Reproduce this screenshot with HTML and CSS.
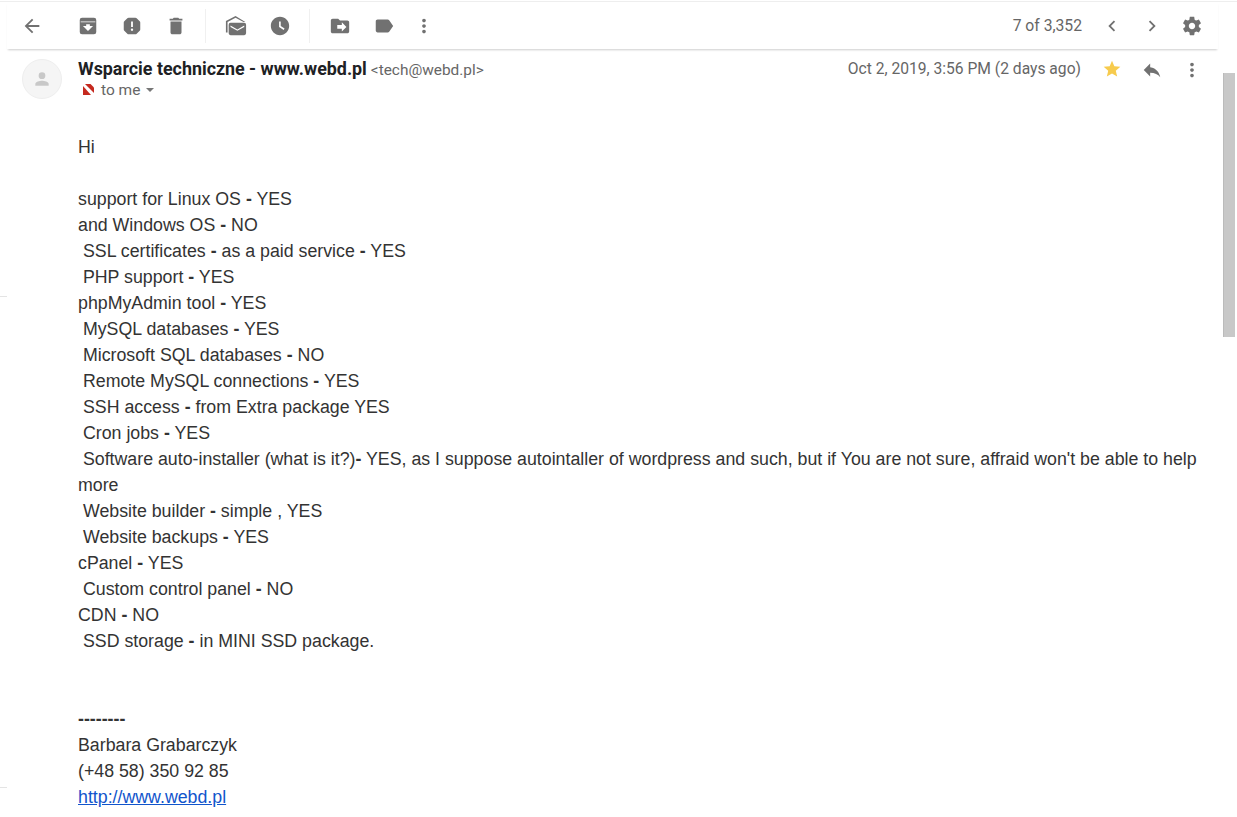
FILE: index.html
```html
<!DOCTYPE html>
<html lang="en">
<head>
    <meta charset="UTF-8">
    <title>Gmail message</title>
    <link rel="stylesheet" href="styles.css">
</head>
<body>

    <div class="page">
        <!-- Toolbar -->
        <div class="toolbar">
            <div class="tool-group back-group">
                <svg class="icon" viewBox="0 0 24 24"><path d="M20 11H7.830l5.590-5.590L12 4l-8 8 8 8 1.410-1.410L7.830 13H20v-2z"/></svg>
            </div>
            <div class="tool-group first-group">
                <svg class="icon" viewBox="0 0 24 24"><path d="M5.500 3h13a2.500 2.500 0 0 1 2.500 2.500v13a2.500 2.500 0 0 1-2.500 2.500h-13A2.500 2.500 0 0 1 3 18.500v-13A2.500 2.500 0 0 1 5.500 3zM4 7v.8h16V7H4zm8 10.500l5.500-5.500H14v-2h-4v2H6.500z" fill-rule="evenodd"/></svg>
                <svg class="icon" viewBox="0 0 24 24"><path d="M8.300 3h7.400a2 2 0 0 1 1.400.6l3.300 3.300a2 2 0 0 1 .6 1.400v7.400a2 2 0 0 1-.6 1.400l-3.300 3.300a2 2 0 0 1-1.400.6H8.300a2 2 0 0 1-1.400-.6l-3.300-3.300a2 2 0 0 1-.6-1.400V8.300a2 2 0 0 1 .6-1.400l3.300-3.300A2 2 0 0 1 8.300 3zM11 7v6h2V7h-2zm1 7.700a1.300 1.300 0 1 0 0 2.600 1.300 1.300 0 0 0 0-2.600z" fill-rule="evenodd"/></svg>
                <svg class="icon" viewBox="0 0 24 24"><path d="M6 19c0 1.100.9 2 2 2h8c1.100 0 2-.9 2-2V7H6v12zM19 4h-3.500l-1-1h-5l-1 1H5v2h14V4z"/></svg>
            </div>
            <div class="tool-group">
                <svg class="icon" viewBox="0 0 24 24"><path d="M11.500 1L1 6.500V19h1.800V7.500l8.700-4.600 8.700 4.600h2L11.500 1zM6 8.500h15a2 2 0 0 1 2 2V20a2 2 0 0 1-2 2H6a2 2 0 0 1-2-2v-9.500a2 2 0 0 1 2-2zm0 3V13l7.500 4.200L21 13v-1.500l-7.500 4.200L6 11.500z" fill-rule="evenodd"/></svg>
                <svg class="icon" viewBox="0 0 24 24"><path d="M11.990 2C6.470 2 2 6.480 2 12s4.470 10 9.990 10C17.520 22 22 17.520 22 12S17.520 2 11.990 2zm4.010 14.300L11 13V7h1.800v5.100l4.200 2.700-1 1.500z"/></svg>
            </div>
            <div class="tool-group">
                <svg class="icon" viewBox="0 0 24 24"><path d="M20 6h-8l-2-2H4c-1.100 0-1.990.9-1.990 2L2 18c0 1.100.9 2 2 2h16c1.100 0 2-.9 2-2V8c0-1.100-.9-2-2-2zm-6 12v-3H9v-4h5V8l5 5-5 5z"/></svg>
                <svg class="icon" viewBox="0 0 24 24"><path d="M17.630 5.840C17.270 5.330 16.670 5 16 5L5 5.010C3.900 5.010 3 5.900 3 7v10c0 1.100.9 1.990 2 1.990L16 19c.67 0 1.270-.33 1.630-.84L22 12l-4.370-6.160z"/></svg>
                <svg class="icon more" viewBox="0 0 24 24"><path d="M12 8c1.100 0 2-.9 2-2s-.9-2-2-2-2 .9-2 2 .9 2 2 2zm0 2c-1.100 0-2 .9-2 2s.9 2 2 2 2-.9 2-2-.9-2-2-2zm0 6c-1.100 0-2 .9-2 2s.9 2 2 2 2-.9 2-2-.9-2-2-2z"/></svg>
            </div>
            <div class="pager">
                <span class="count">7 of 3,352</span>
                <svg class="icon" viewBox="0 0 24 24"><path d="M15.410 7.410L14 6l-6 6 6 6 1.410-1.410L10.830 12z"/></svg>
                <svg class="icon" viewBox="0 0 24 24"><path d="M10 6L8.590 7.410 13.170 12l-4.580 4.590L10 18l6-6z"/></svg>
                <svg class="icon" viewBox="0 0 24 24"><path d="M19.430 12.980c.04-.32.07-.64.07-.98s-.03-.66-.07-.98l2.110-1.650c.19-.15.24-.42.12-.64l-2-3.460c-.12-.22-.39-.3-.61-.22l-2.490 1c-.52-.4-1.080-.73-1.690-.98l-.38-2.650C14.460 2.180 14.250 2 14 2h-4c-.25 0-.46.18-.49.42l-.38 2.650c-.61.25-1.170.59-1.690.98l-2.490-1c-.23-.09-.49 0-.61.22l-2 3.460c-.13.22-.07.49.12.64l2.110 1.650c-.04.32-.07.65-.07.98s.03.66.07.98l-2.110 1.650c-.19.15-.24.42-.12.64l2 3.460c.12.22.39.3.61.22l2.490-1c.52.4 1.080.73 1.690.98l.38 2.650c.03.24.24.42.49.42h4c.25 0 .46-.18.49-.42l.38-2.650c.61-.25 1.170-.59 1.690-.98l2.490 1c.23.09.49 0 .61-.22l2-3.460c.12-.22.07-.49-.12-.64l-2.110-1.650zM12 15.500c-1.930 0-3.500-1.570-3.500-3.500s1.570-3.500 3.500-3.500 3.500 1.570 3.500 3.500-1.570 3.500-3.500 3.500z"/></svg>
            </div>
        </div>

        <!-- Message -->
        <div class="message">
            <div class="avatar">
                <svg viewBox="0 0 24 24"><circle cx="12" cy="8" r="4"/><path d="M4 20v-2c0-2.700 5.300-4 8-4s8 1.300 8 4v2H4z"/></svg>
            </div>
            <div class="message-main">
                <div class="message-head">
                    <div class="sender-info">
                        <div class="sender"><span class="sender-name">Wsparcie techniczne - www.webd.pl</span> <span class="sender-email">&lt;tech@webd.pl&gt;</span></div>
                        <div class="recipient">
                            <svg class="no-lock" viewBox="0 0 16 16"><path d="M4 2h5.500L13 5.500V11z"/><path d="M2 4l8 9H2z"/></svg>
                            <span>to me</span>
                            <span class="caret"></span>
                        </div>
                    </div>
                    <div class="message-date">Oct 2, 2019, 3:56 PM (2 days ago)</div>
                    <div class="message-actions">
                        <svg class="icon star" viewBox="0 0 24 24"><path d="M12 17.270L18.180 21l-1.640-7.030L22 9.240l-7.190-.61L12 2 9.190 8.630 2 9.240l5.460 4.730L5.820 21z"/></svg>
                        <svg class="icon" viewBox="0 0 24 24"><path d="M10 9V5l-7 7 7 7v-4.100c5 0 8.500 1.600 11 5.100-1-5-4-10-11-11z"/></svg>
                        <svg class="icon" viewBox="0 0 24 24"><path d="M12 8c1.100 0 2-.9 2-2s-.9-2-2-2-2 .9-2 2 .9 2 2 2zm0 2c-1.100 0-2 .9-2 2s.9 2 2 2 2-.9 2-2-.9-2-2-2zm0 6c-1.100 0-2 .9-2 2s.9 2 2 2 2-.9 2-2-.9-2-2-2z"/></svg>
                    </div>
                </div>
                <div class="message-body">
                    Hi<br>
                    <br>
                    support for Linux OS <b>-</b> YES<br>
                    and Windows OS <b>-</b> NO<br>
                    &nbsp;SSL certificates <b>-</b> as a paid service <b>-</b> YES<br>
                    &nbsp;PHP support <b>-</b> YES<br>
                    phpMyAdmin tool <b>-</b> YES<br>
                    &nbsp;MySQL databases <b>-</b> YES<br>
                    &nbsp;Microsoft SQL databases <b>-</b> NO<br>
                    &nbsp;Remote MySQL connections <b>-</b> YES<br>
                    &nbsp;SSH access <b>-</b> from Extra package YES<br>
                    &nbsp;Cron jobs <b>-</b> YES<br>
                    &nbsp;Software auto-installer (what is it?)<b>-</b> YES, as I suppose autointaller of wordpress and such, but if You are not sure, affraid won't be able to help more<br>
                    &nbsp;Website builder <b>-</b> simple , YES<br>
                    &nbsp;Website backups <b>-</b> YES<br>
                    cPanel <b>-</b> YES<br>
                    &nbsp;Custom control panel <b>-</b> NO<br>
                    CDN <b>-</b> NO<br>
                    &nbsp;SSD storage <b>-</b> in MINI SSD package.<br>
                    <br>
                    <br>
                    <b>--------</b><br>
                    Barbara Grabarczyk<br>
                    (+48 58) 350 92 85<br>
                    <a href="#">http://www.webd.pl</a>
                </div>
            </div>
        </div>
    </div>

    <!-- Scrollbar -->
    <div class="scrollbar">
        <div class="scroll-thumb"></div>
    </div>

    <!-- Faint ticks on the left edge -->
    <div class="edge-mark edge-mark-top"></div>
    <div class="edge-mark edge-mark-bottom"></div>

</body>
</html>
```

FILE: styles.css
```css
* {
    margin: 0;
    padding: 0;
    box-sizing: border-box;
}

html, body {
    height: 100%;
    overflow: hidden;
}

body {
    display: flex;
    font-family: Roboto, Arial, sans-serif;
    background-color: #fff;
    color: #222;
}

.page {
    flex: 1;
    min-width: 0;
    padding-left: 7px;
    padding-top: 2px;
    background: linear-gradient(#eee, #eee) 0 1px / 100% 1px no-repeat;
}

.icon {
    width: 22px;
    height: 22px;
    fill: #717171;
    display: block;
    flex: none;
}

/* Toolbar */
.toolbar {
    display: flex;
    align-items: center;
    height: 47px;
    width: 1211px;
    box-shadow: 0 2px 2px -1px rgba(0, 0, 0, 0.2);
}

.tool-group {
    display: flex;
    align-items: center;
    gap: 22px;
    height: 34px;
    padding: 0 18px 0 19px;
    border-left: 1px solid #f0f0f0;
}

.back-group {
    width: 70px;
    padding: 0 0 0 14px;
    border-left: none;
}

.first-group {
    padding-left: 0;
    border-left: none;
}

.tool-group .more {
    margin-left: -4px;
}

.pager {
    margin-left: auto;
    display: flex;
    align-items: center;
    gap: 18px;
    padding-right: 15px;
}

.count {
    font-size: 15.7px;
    color: #666;
    margin-right: 1px;
}

/* Message */
.message {
    display: flex;
    padding: 10px 0 0 15px;
}

.avatar {
    width: 40px;
    height: 40px;
    border-radius: 50%;
    background-color: #f5f5f5;
    border: 1px solid #eee;
    display: flex;
    align-items: center;
    justify-content: center;
    flex: none;
}

.avatar svg {
    width: 20px;
    height: 20px;
    fill: #c8c8c8;
}

.message-main {
    flex: 1;
    min-width: 0;
    margin-left: 16px;
}

.message-head {
    display: flex;
    align-items: flex-start;
    height: 44px;
}

.sender-info {
    flex: 1;
}

.sender {
    line-height: 20px;
}

.sender-name {
    font-size: 17.88px;
    font-weight: 700;
    color: #202124;
}

.sender-email {
    font-size: 15.4px;
    color: #666;
}

.recipient {
    display: flex;
    align-items: center;
    font-size: 15.5px;
    line-height: 20px;
    color: #666;
}

.no-lock {
    width: 16px;
    height: 16px;
    fill: #c5291f;
    margin: 0 4px 0 3px;
}

.caret {
    border: 4px solid transparent;
    border-top-color: #777;
    border-bottom: none;
    margin-left: 6px;
}

.message-date {
    font-size: 15.64px;
    line-height: 20px;
    color: #666;
    margin-right: 20px;
}

.message-actions {
    display: flex;
    gap: 18px;
    margin-right: 34px;
}

.icon.star {
    width: 20px;
    height: 20px;
    margin: 0 1px;
    fill: #f7cb4d;
}

.message-body {
    margin-top: 31px;
    font-family: "Liberation Sans", Arial, sans-serif;
    font-size: 17.78px;
    line-height: 26px;
    color: #333;
    padding-right: 32px;
}

.message-body a {
    color: #1155cc;
}

/* Scrollbar */
.scrollbar {
    position: fixed;
    top: 0;
    right: 2px;
    width: 12px;
    height: 100%;
    padding-top: 73px;
}

.scroll-thumb {
    height: 264px;
    background-color: #c8c8c8;
    border-left: 1px solid #bbb;
}

.edge-mark {
    position: fixed;
    left: 0;
    width: 7px;
    height: 1px;
    background-color: #e4e4e4;
}

.edge-mark-top {
    top: 296px;
}

.edge-mark-bottom {
    top: 787px;
}
```
